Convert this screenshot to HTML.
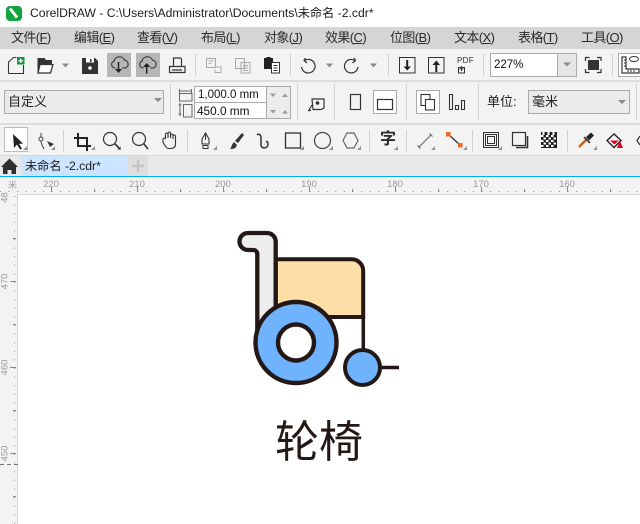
<!DOCTYPE html>
<html><head><meta charset="utf-8"><style>
html,body{margin:0;padding:0;background:#fff}
#p{position:relative;width:640px;height:524px;overflow:hidden;background:#fff;font-family:"Liberation Sans","Noto Sans CJK SC",sans-serif;color:#222}
.a{position:absolute}
.t{position:absolute;white-space:nowrap;line-height:16px}
.m{position:absolute;top:30px;font-size:13px;line-height:16px;white-space:nowrap;color:#2a2a2a;letter-spacing:-.6px}
.m u{text-decoration:underline;text-underline-offset:1px}
.r{position:absolute;top:179px;font-size:9.5px;line-height:11px;color:#999;width:30px;text-align:center}
.v{position:absolute;left:-7px;font-size:9.5px;line-height:11px;color:#999;width:24px;text-align:center;transform:rotate(-90deg)}
.b{position:absolute;box-sizing:border-box}
</style></head><body><div id="p">
<div class="a" style="left:0;top:27px;width:640px;height:22px;background:#d5d5d5"></div>
<div class="a" style="left:0;top:49px;width:640px;height:107px;background:#f3f3f3"></div>
<div class="a" style="left:0;top:80px;width:640px;height:2px;background:#dcdcdc"></div>
<div class="a" style="left:0;top:123px;width:640px;height:2px;background:#dcdcdc"></div>
<div class="a" style="left:0;top:155px;width:640px;height:1px;background:#d4d4d4"></div>
<div class="a" style="left:0;top:156px;width:640px;height:20px;background:#e8e8e8"></div>
<div class="a" style="left:128px;top:156px;width:20px;height:20px;background:#dedede"></div>
<div class="a" style="left:21px;top:156px;width:107px;height:20px;background:#cce4ff"></div>
<div class="a" style="left:0;top:176px;width:640px;height:1px;background:#00aef0"></div>
<div class="a" style="left:0;top:177px;width:640px;height:17px;background:#f3f3f3"></div>
<div class="a" style="left:0;top:177px;width:18px;height:347px;background:#f3f3f3"></div>
<div class="a" style="left:17px;top:194px;width:623px;height:1px;background:#d6d6d6"></div>
<div class="a" style="left:17px;top:194px;width:1px;height:330px;background:#d6d6d6"></div>

<!-- boxes -->
<div class="b" style="left:107px;top:53px;width:24px;height:24px;background:#b6b6b6"></div>
<div class="b" style="left:136px;top:53px;width:24px;height:24px;background:#b6b6b6"></div>
<div class="b" style="left:490px;top:53px;width:87px;height:24px;background:#fff;border:1px solid #aaa"></div>
<div class="b" style="left:557px;top:54px;width:19px;height:22px;background:#e6e6e6;border-left:1px solid #aaa"></div>
<div class="b" style="left:618px;top:53px;width:30px;height:24px;background:#fff;border:1px solid #aaa"></div>
<div class="b" style="left:4px;top:90px;width:160px;height:24px;background:#ebebeb;border:1px solid #aaa"></div>
<div class="b" style="left:194px;top:86px;width:97px;height:33px;background:#ececec;border:1px solid #aaa"></div>
<div class="b" style="left:195px;top:87px;width:71px;height:15px;background:#fff"></div>
<div class="b" style="left:195px;top:103px;width:71px;height:15px;background:#fff"></div>
<div class="a" style="left:195px;top:102px;width:71px;height:1px;background:#aaa"></div>
<div class="a" style="left:266px;top:87px;width:1px;height:31px;background:#aaa"></div>
<div class="b" style="left:373px;top:90px;width:24px;height:24px;background:#fff;border:1px solid #aaa"></div>
<div class="b" style="left:416px;top:90px;width:24px;height:24px;background:#fff;border:1px solid #aaa"></div>
<div class="b" style="left:528px;top:90px;width:102px;height:24px;background:#ebebeb;border:1px solid #aaa"></div>
<div class="b" style="left:4px;top:127px;width:24px;height:25px;background:#fff;border:1px solid #bbb"></div>

<!-- text -->
<div class="t" style="left:30px;top:5px;font-size:12.2px;color:#1c1c1c">CorelDRAW - C:\Users\Administrator\Documents\未命名 -2.cdr*</div>
<div class="m" style="left:11px">文件(<u>F</u>)</div>
<div class="m" style="left:74px">编辑(<u>E</u>)</div>
<div class="m" style="left:137px">查看(<u>V</u>)</div>
<div class="m" style="left:201px">布局(<u>L</u>)</div>
<div class="m" style="left:264px">对象(<u>J</u>)</div>
<div class="m" style="left:325px">效果(<u>C</u>)</div>
<div class="m" style="left:390px">位图(<u>B</u>)</div>
<div class="m" style="left:454px">文本(<u>X</u>)</div>
<div class="m" style="left:518px">表格(<u>T</u>)</div>
<div class="m" style="left:581px">工具(<u>O</u>)</div>
<div class="t" style="left:494px;top:57px;font-size:11.5px;color:#111">227%</div>
<div class="t" style="left:8px;top:94px;font-size:13px">自定义</div>
<div class="t" style="left:198px;top:87px;font-size:11.5px;color:#111">1,000.0 mm</div>
<div class="t" style="left:197px;top:103px;font-size:11.8px;color:#111">450.0 mm</div>
<div class="t" style="left:487px;top:94px;font-size:13px">单位:</div>
<div class="t" style="left:532px;top:94px;font-size:13px">毫米</div>
<div class="t" style="left:25px;top:158px;font-size:12.2px;color:#1c1c1c">未命名 -2.cdr*</div>
<div class="t" style="left:380px;top:132px;font-size:16px;font-weight:bold;color:#2a2a2a">字</div>
<div class="t" style="left:457px;top:56px;font-size:8px;line-height:9px;color:#333;letter-spacing:.3px">PDF</div>

<div class="r" style="left:36px">220</div><div class="r" style="left:122px">210</div><div class="r" style="left:208px">200</div><div class="r" style="left:294px">190</div><div class="r" style="left:380px">180</div><div class="r" style="left:466px">170</div><div class="r" style="left:552px">160</div>
<div class="v" style="top:276px">470</div><div class="v" style="top:362px">460</div><div class="v" style="top:448px">450</div><div class="v" style="top:192px;height:11px;overflow:hidden">48</div>
<div class="t" style="left:8px;top:180px;font-size:9px;line-height:10px;color:#999">米</div>

<svg class="a" style="left:0;top:0" width="640" height="524" viewBox="0 0 640 524" fill="none">
<!-- app icon -->
<rect x="6" y="6" width="16" height="15" rx="4" fill="#0ea63c"/><path d="M10 8.500l7 9" stroke="#fff" stroke-width="3"/>
<!-- separators -->
<g stroke="#d2d2d2"><path d="M195.500 54v22M290.500 54v22M388.500 54v22M483.500 54v22M612.500 54v22M170.500 84v36M297.500 84v36M334.500 84v36M406.500 84v36M478.500 84v36M636.500 84v36M63.500 130v22M187.500 130v22M369.500 130v22M406.500 130v22M472.500 130v22M567.500 130v22"/></g>
<!-- new -->
<path d="M8.500 73.500V62l5-4.500h3M8.500 73.500h15V65" stroke="#333" stroke-width="1.100"/><rect x="17" y="57" width="7.500" height="7.500" fill="#0a9a3c"/><path d="M20.700 58.500v4.500M18.500 60.700h4.500" stroke="#fff" stroke-width="1.300"/>
<!-- open -->
<path d="M37.500 58h7l1.500 2h6v4H41l-2 9h-1.500z" fill="#333"/><path d="M40 64.500h13l-2.500 8.500H38z" fill="#fff" stroke="#333" stroke-width="1.300"/>
<g fill="#8a8a8a"><path d="M62 63.500h7l-3.500 4zM326 63.500h7l-3.500 4zM370 63.500h7l-3.500 4z"/></g>
<path d="M563 62.500h8l-4 4z" fill="#8a8a8a"/>
<!-- save -->
<path d="M82 58h13l3 3v13H82z" fill="#333"/><rect x="86" y="58" width="8" height="4.500" fill="#fff"/><rect x="90" y="59" width="1.500" height="3" fill="#333"/><circle cx="90" cy="68" r="1.800" fill="#fff"/>
<!-- cloud down / up -->
<path d="M115.500 68h-.5a3.500 3.500 0 0 1-1-6.800a5.500 5.500 0 0 1 10.500-1a4 4 0 0 1 .8 7.800h-3.300" stroke="#333" stroke-width="1.100"/><path d="M118.500 62v8" stroke="#222" stroke-width="1.500"/><path d="M115 69h7l-3.500 4z" fill="#222"/>
<path d="M143.500 68h-.5a3.500 3.500 0 0 1-1-6.800a5.500 5.500 0 0 1 10.500-1a4 4 0 0 1 .8 7.800h-3" stroke="#333" stroke-width="1.100"/><path d="M146.700 66v7.500" stroke="#222" stroke-width="1.500"/><path d="M143 67l3.700-4 3.700 4z" fill="#222"/>
<!-- print -->
<path d="M173.500 66v-8h7l1 1v7M169.500 66.500h15.500v6h-15.500zM172 70h10" stroke="#333" stroke-width="1.200"/>
<!-- disabled -->
<g stroke="#a8a8a8"><path d="M206.500 58.500h9v9h-9zM208.500 61h5M208.500 63.500h3M216 67h5v5.500h-6v-3"/><path d="M235.500 58.500h9v10h-9zM241 62.500h9v10.500h-9zM243 65.500h5M243 68h5M243 70.500h5"/></g>
<path d="M264 58h9v11h-9z" fill="#222"/><path d="M266.500 57h4v2h-4z" fill="#222"/><path d="M271.500 62.500h8v10.500h-8z" fill="#fff" stroke="#333"/><path d="M273.500 65.500h4M273.500 68h4M273.500 70.500h4" stroke="#333"/>
<!-- undo/redo -->
<path d="M305.500 58l-1.500 2.500 3 2.500M304.500 60.500a6.800 6.800 0 1 1-3 6.500" stroke="#333" stroke-width="1.200"/>
<path d="M354 58l1.500 2.500-3 2.500M355 60.500a6.800 6.800 0 1 0 3 6.500" stroke="#333" stroke-width="1.200"/>
<!-- import/export -->
<path d="M399.500 57.500h15.500v15.500h-15.500zM428.500 57.500h15.500v15.500h-15.500z" stroke="#333"/>
<path d="M407.200 60v8" stroke="#222" stroke-width="2"/><path d="M403.500 66.500h7.500l-3.800 4zM432.500 65l3.800-4.500 3.800 4.500z" fill="#222"/><path d="M436.300 64v8" stroke="#222" stroke-width="2"/>
<path d="M458.500 67.500h6v5.500h-6zM461.500 66v5M459.500 69h4" stroke="#333"/>
<!-- fullscreen -->
<rect x="588" y="60" width="11" height="10" fill="#333"/><path d="M585.500 61v-3.500h4M601 61v-3.500h-4M585.500 69v3.500h4M601 69v3.500h-4" stroke="#333" stroke-width="1.200"/>
<!-- options -->
<path d="M622 57v16h17v-4h-13V57z" stroke="#333" stroke-width="1.200"/><path d="M624 60h2M624 63h2M624 66h2M628 70v2M631 70v2M634 70v2" stroke="#333"/><ellipse cx="634" cy="59" rx="4.500" ry="2.500" stroke="#333"/>
<!-- toolbar2 -->
<path d="M154 98h8l-4 4zM618 100h8l-4 4z" fill="#8a8a8a"/>
<path d="M179.500 89v4M191.500 89v4M179.500 91h12M179.500 93.500h12.500v7.500h-12.500zM180 103v13M178.500 105h3M178.500 114h3M183.500 104.500h8.500v12.500h-8.500z" stroke="#666"/>
<path d="M270 93.500h6l-3 3.500zM270 110h6l-3 3.500z" fill="#9a9a9a"/><path d="M282 97l3-3.500 3 3.500zM282 113.500l3-3.500 3 3.500z" fill="#9a9a9a"/>
<path d="M312 99h12v9l-3 1.500h-8zM312 105l-3 5M308 110.500h3" stroke="#333" stroke-width="1.200"/><circle cx="317.500" cy="103" r="1.800" fill="#333"/>
<rect x="350.500" y="94.500" width="10" height="15" stroke="#333" stroke-width="1.200"/><rect x="377.500" y="99.500" width="15" height="10" stroke="#333" stroke-width="1.200"/>
<rect x="421" y="94.500" width="9" height="11" stroke="#333" stroke-width="1.100"/><rect x="425.500" y="99.500" width="9" height="10.500" fill="#fff" stroke="#333" stroke-width="1.100"/>
<path d="M449.500 94.500h3v15h-3zM455.500 105.500h3v4h-3zM461.500 100.500h3v9h-3z" stroke="#333" stroke-width="1.100"/>
<!-- toolbar3 small corners -->
<g fill="#8f8f8f"><path d="M27 150v-4l-4 4zM55 150v-4l-4 4zM95 150v-4l-4 4zM121 150v-4l-4 4zM217 150v-4l-4 4zM304 150v-4l-4 4zM333 150v-4l-4 4zM361 150v-4l-4 4zM398 150v-4l-4 4zM435 150v-4l-4 4zM467 150v-4l-4 4zM502 150v-4l-4 4zM597 150v-4l-4 4z"/></g>
<path d="M13 134l1 14 3-3.500 3 5 2-1-3-4.500 4-.5z" fill="#222"/>
<path d="M41 133v4M41 141c0 3 2 6 3 8" stroke="#444"/><circle cx="41" cy="139" r="2" stroke="#444"/><path d="M47 141l7 3-4 3z" fill="#333"/>
<path d="M78 133v13h13M74 138h13v13" stroke="#222" stroke-width="2"/>
<circle cx="110" cy="139" r="6.500" stroke="#333" stroke-width="1.200"/><path d="M115 144l5 5" stroke="#333" stroke-width="1.600"/>
<circle cx="139" cy="139" r="6.500" stroke="#333" stroke-width="1.200"/><path d="M144 144l4 5" stroke="#333" stroke-width="1.600"/>
<path d="M163 142v-3a1.300 1.300 0 0 1 2.500 0M165.500 139v-5a1.300 1.300 0 0 1 2.500 0v4M168 135v-2a1.300 1.300 0 0 1 2.500 0v5M170.500 135a1.300 1.300 0 0 1 2.500 0v4M173 136a1.300 1.300 0 0 1 2.500 0v8c0 3-2 4.500-5 4.500h-2c-2 0-3-2-6-7" stroke="#333" stroke-width="1.100"/>
<path d="M205.500 133l3.500 6v5h-7v-5z" stroke="#333" stroke-width="1.100"/><path d="M205.500 134v6M203 145.500h5v3h-5z" stroke="#333"/>
<path d="M242 133l2 2-6 8-3-2zM234 142l3 3-1 2c-1 1.500-3 2-6 2 2-2 1-4 4-7z" fill="#333"/>
<path d="M257 135c2-2 4 0 4 3v7c0 4 7 4 7-1 0-2-1-3-2-2" stroke="#333" stroke-width="1.500"/>
<rect x="285.500" y="133" width="15" height="15" stroke="#333" stroke-width="1.300"/>
<circle cx="322.500" cy="140.500" r="8" stroke="#444" stroke-width="1.200"/>
<path d="M347 133h7l4 7.500-4 7.500h-7l-4-7.500z" stroke="#666" stroke-width="1.200"/>
<path d="M431 135l-12 12M429.500 133.500l3 3M417.500 145.500l3 3" stroke="#666" stroke-width="1.100"/>
<path d="M448 134l12 11" stroke="#333" stroke-width="1.300"/><rect x="446" y="132" width="4.500" height="4.500" fill="#f26522"/><rect x="458" y="143" width="4.500" height="4.500" fill="#f26522"/>
<rect x="483.500" y="132.500" width="15" height="15" stroke="#333"/><rect x="485.500" y="134.500" width="11" height="11" stroke="#333"/><rect x="487.500" y="136.500" width="7" height="7" stroke="#333"/>
<rect x="512.500" y="132.500" width="13" height="13" stroke="#333" stroke-width="1.200"/><path d="M527.500 136v11.500H516" stroke="#333" stroke-width="1.600"/>
<rect x="541" y="132" width="16" height="16" fill="#222"/>
<path d="M543.500 132v3M548.500 132v3M553.500 132v3M541 136h2.500M546 136h2.500M551 136h2.500M543.500 138.500h2.500M548.500 138.500h2.500M553.500 138.500h2.500M541 141h2.500M546 141h2.500M551 141h2.500M543.500 143.500h2.500M548.500 143.500h2.500M553.500 143.500h2.500M541 146h2.500M546 146h2.500M551 146h2.500" stroke="#fff" stroke-width="2"/>
<path d="M579 147l8-8" stroke="#c4611f" stroke-width="2.500"/><path d="M586 137l5-4.500 3 3-5 5z" fill="#222"/><path d="M584 137l6 6" stroke="#222" stroke-width="1.500"/>
<path d="M615 134l-7 6.500 7 7 7-7z" fill="#fff" stroke="#222" stroke-width="1.400" transform="translate(-1 0)"/><path d="M610 140.500h9l-4.500 4z" fill="#e8001c"/><path d="M620 141l3 7h-6z" fill="#e8001c"/>
<path d="M640 136l-3 4.500 3 4.500" stroke="#333" stroke-width="1.200"/>
<!-- tab bar -->
<path d="M1 167l8.500-8.500 8.500 8.500h-2v7h-4.500v-4h-4v4H3v-7z" fill="#2f2f2f"/>
<path d="M138 160v12M132 166h12" stroke="#c4c4c4" stroke-width="2.400"/>
<!-- ruler ticks -->
<g stroke="#888">
<path d="M0 191.500H640" stroke-width="1" stroke-dasharray="1 7.600" stroke-dashoffset="-8.500"/>
<path d="M51.500 187v5M137.500 187v5M223.500 187v5M309.500 187v5M395.500 187v5M481.500 187v5M567.500 187v5"/>
<path d="M94.500 189v3M180.500 189v3M266.500 189v3M352.500 189v3M438.500 189v3M524.500 189v3M610.500 189v3"/>
<path d="M14.500 195V524" stroke-width="1" stroke-dasharray="1 7.600" stroke-dashoffset="-1"/>
<path d="M10 281.500h6M10 367.500h6M10 453.500h6M13 238.500h3M13 324.500h3M13 410.500h3M13 496.500h3"/>
</g>
<path d="M0 464.500h18" stroke="#777" stroke-dasharray="4 3"/>
<!-- wheelchair -->
<path d="M257.300 330V254a4 4 0 0 0-4-4H248a8.500 8.500 0 0 1 0-17h19a8.700 8.700 0 0 1 8.700 8.700V330z" fill="#ededed"/>
<path d="M275.700 259.300h76a11.500 11.500 0 0 1 11.500 11.500V317H275.700z" fill="#ffdfa8" stroke="#231815" stroke-width="4"/>
<path d="M257.300 330V254a4 4 0 0 0-4-4H248a8.500 8.500 0 0 1 0-17h19a8.700 8.700 0 0 1 8.700 8.700V310" stroke="#231815" stroke-width="4.300"/>
<path d="M363.300 317v35M380 367.500h19" stroke="#231815" stroke-width="3.500"/>
<circle cx="296" cy="342.500" r="40.500" fill="#6fb3ff" stroke="#231815" stroke-width="4.400"/>
<circle cx="296" cy="342.500" r="18" fill="#fff" stroke="#231815" stroke-width="4.400"/>
<circle cx="362.500" cy="367.500" r="17.500" fill="#6fb3ff" stroke="#231815" stroke-width="4"/>
</svg>
<div class="t" style="left:275px;top:407px;font-size:44px;line-height:62px;color:#231815;font-weight:400;font-family:'Noto Sans CJK SC',sans-serif">轮椅</div>
</div></body></html>
